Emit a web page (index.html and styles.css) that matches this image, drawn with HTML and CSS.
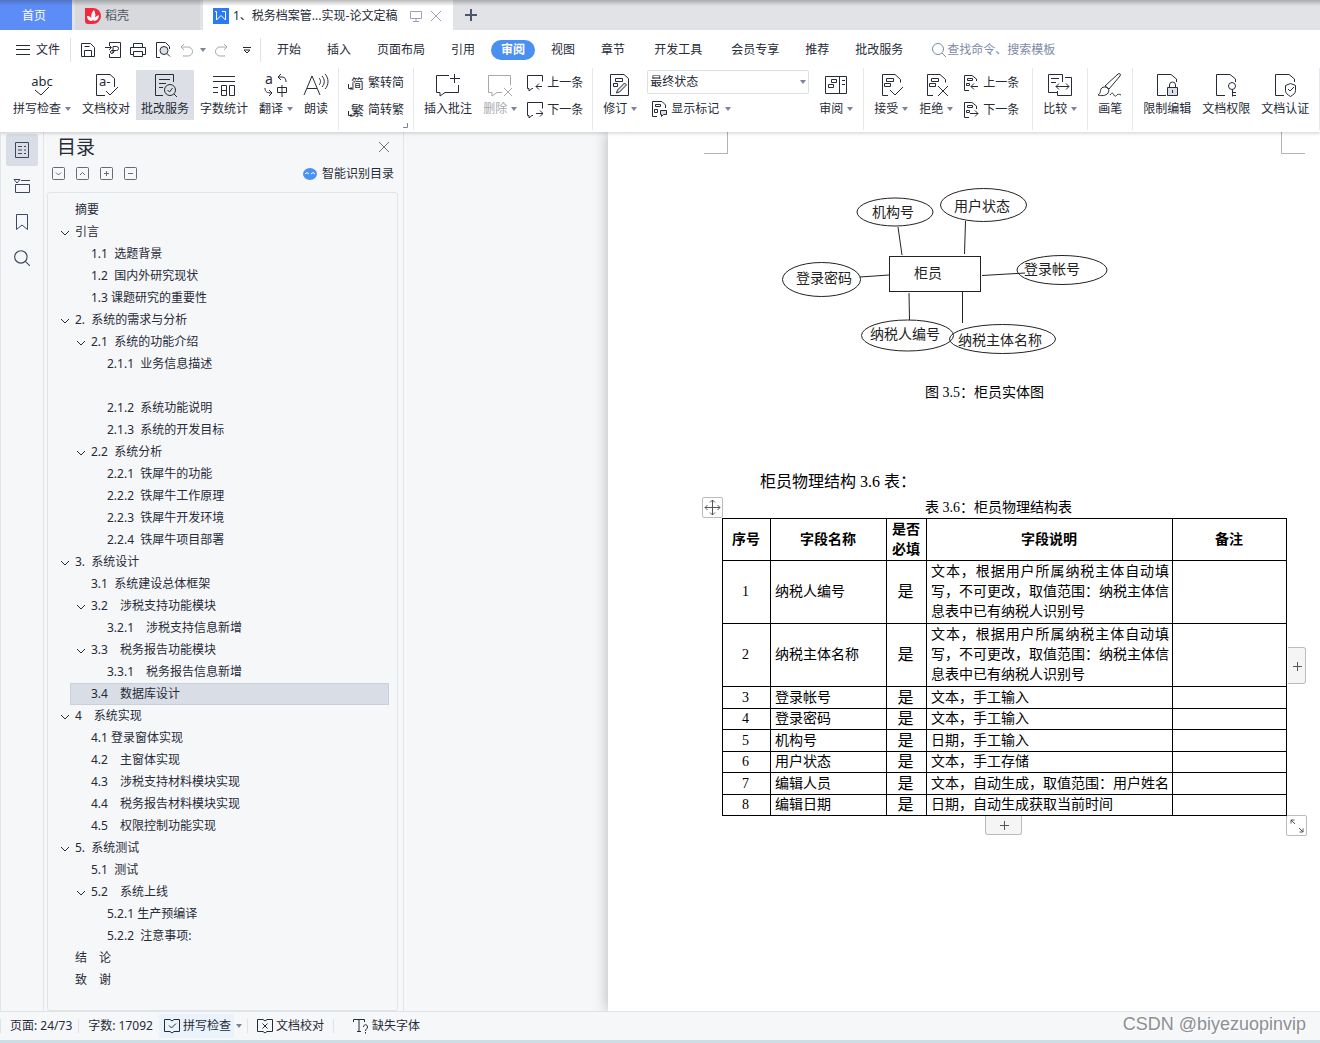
FILE: index.html
```html
<!DOCTYPE html>
<html lang="zh-CN">
<head>
<meta charset="utf-8">
<title>税务档案管理系统-论文定稿</title>
<link rel="stylesheet" href="styles.css">
</head>
<body>
<svg class="defs" aria-hidden="true">
  <symbol id="caret" viewBox="0 0 6 4"><path d="M0 0h6L3 4z" fill="currentColor" stroke="none"/></symbol>
  <symbol id="down" viewBox="0 0 10 10"><path d="M1 3l4 4 4-4"/></symbol>
  <symbol id="close" viewBox="0 0 12 12"><path d="M1 1l10 10M11 1L1 11"/></symbol>
  <symbol id="search" viewBox="0 0 16 16"><circle cx="7" cy="7" r="5.5"/><path d="M11 11l4 4"/></symbol>
  <symbol id="mark" viewBox="0 0 24 24"><path d="M9 22.500H3.500V1.500H16l5.500 5v3M7.500 5.500h7v3h-7zM5.500 10.500h6v3h-6z"/></symbol>
  <symbol id="sheet" viewBox="0 0 24 24"><path d="M11 22.500H2.500V1.500H16l5.500 4.500v3"/></symbol>
  <symbol id="prevmark" viewBox="0 0 16 16"><path d="M6 15.500H1.500V.500H9L13.500 4v2M4.500 3.500h5v2h-5zM3.500 8.500h3v2h-3zM15 11.500H8M11 8.500l-3 3 3 3"/></symbol>
  <symbol id="nextmark" viewBox="0 0 16 16"><path d="M6 15.500H1.500V.500H9L13.500 4v3M4.500 3.500h5v2h-5zM3.500 8.500h3v2h-3zM7 11.500h8M12 8.500l3 3-3 3"/></symbol>
  <symbol id="prevnote" viewBox="0 0 16 16"><path d="M6 13.500H5l-3 2.500v-2.500H.500v-13h15v6M15 11.500H9M12 8.500l-3 3 3 3"/></symbol>
  <symbol id="nextnote" viewBox="0 0 16 16"><path d="M6 13.500H5l-3 2.500v-2.500H.500v-13h15v6M9 11.500h7M13 8.500l3 3-3 3"/></symbol>
</svg>

<header class="top">
  <div class="tabs">
    <button class="tab home">首页</button>
    <button class="tab docer">
      <svg width="16" height="16" viewBox="0 0 16 16"><path d="M0 0h8a8 8 0 010 16H3a3 3 0 01-3-3z" fill="#f3293d" stroke="none"/><path d="M8 13C5 10 6 5 9 2c2 4 2 8-1 11zM7 13C4 13 2 11 2 8c3 0 5 2 5 5zM9 13c0-3 2-5 5-6 0 3-2 6-5 6z" fill="#fff" stroke="none"/></svg>稻壳
    </button>
    <div class="tab active">
      <svg width="16" height="16" viewBox="0 0 16 16"><path d="M0 0h16v16H0z" fill="#2b7cf0" stroke="none"/><path d="M2 3.500h1.500V12L8 7.500l4.500 4.500V3.500H9" stroke="#fff"/></svg>
      <span class="tab-name">1、税务档案管...实现-论文定稿</span>
      <svg class="faint" width="12" height="12" viewBox="0 0 12 12"><path d="M.500 1.500h11v7H.500zM6 8.500V11M3 11.500h6"/></svg>
      <button class="bare faint" aria-label="关闭标签"><svg width="12" height="12"><use href="#close"/></svg></button>
    </div>
    <button class="bare add" aria-label="新建"><svg width="12" height="12" viewBox="0 0 12 12"><path d="M6 0v12M0 6h12" stroke-width="2"/></svg></button>
  </div>

  <div class="menu">
    <button class="bare file"><svg width="14" height="10" viewBox="0 0 14 10"><path d="M0 .500h14M0 4.500h14M0 9.500h14"/></svg>文件</button>
    <div class="quick">
      <button class="bare" aria-label="保存"><svg width="16" height="16" viewBox="0 0 16 16"><path d="M1.500 14.500v-13h9l4 4v9zM4.500 14V8.500h7V14M4.500 4.500h5"/></svg></button>
      <button class="bare" aria-label="输出为PDF"><svg width="16" height="16" viewBox="0 0 16 16"><path d="M4.500 3V.500h11v15h-11V12M0 5.500h6M4 3l2.500 2.500L4 8M8 11V4.500h3.500a2 2 0 010 4H7a1.500 1.500 0 100 3c2 0 1-3 3-3"/></svg></button>
      <button class="bare" aria-label="打印"><svg width="16" height="16" viewBox="0 0 16 16"><path d="M3.500 5V1.500h9V5M3.500 12.500h-3v-7h15v7h-3M3.500 9.500h9v5h-9z"/></svg></button>
      <button class="bare" aria-label="打印预览"><svg width="16" height="16" viewBox="0 0 16 16"><path d="M5 15.500H1.500V.500h9l4 4V7"/><circle cx="9" cy="8.500" r="4" fill="#dce0e6"/><path d="M12 11.500l3 3"/></svg></button>
      <button class="bare off" aria-label="撤销"><svg width="13" height="14" viewBox="0 0 13 14"><path d="M4 1L1 4l3 3M1 4h7a4.500 4.500 0 010 9H3"/></svg></button>
      <svg class="caret" width="6" height="4"><use href="#caret"/></svg>
      <button class="bare off" aria-label="恢复"><svg width="13" height="14" viewBox="0 0 13 14"><path d="M9 1l3 3-3 3M12 4H5a4.500 4.500 0 000 9h5"/></svg></button>
      <button class="bare" aria-label="更多"><svg width="8" height="7" viewBox="0 0 8 7"><path d="M0 .500h8M1 3l3 3 3-3z"/></svg></button>
    </div>
    <nav class="menus">
      <button>开始</button><button>插入</button><button>页面布局</button><button>引用</button><button class="on">审阅</button><button>视图</button><button>章节</button><button class="wide">开发工具</button><button>会员专享</button><button>推荐</button><button>批改服务</button>
    </nav>
    <label class="find"><svg width="16" height="16"><use href="#search"/></svg><input type="text" placeholder="查找命令、搜索模板" aria-label="查找命令、搜索模板"></label>
  </div>

  <div class="ribbon">
    <div class="group first">
      <button class="big"><svg width="24" height="24" viewBox="0 0 24 24"><text x="12" y="13" text-anchor="middle" font-size="13">abc</text><path d="M5 17l6 5 8-8"/></svg><span>拼写检查<svg class="caret" width="6" height="4"><use href="#caret"/></svg></span></button>
      <button class="big"><svg width="24" height="24" viewBox="0 0 24 24"><path d="M11 22.500H2.500V1.500H16l4.500 4V14M12 18l4 4 8-8"/><text x="5" y="13" font-size="13">a-</text></svg><span>文档校对</span></button>
      <button class="big on"><svg width="24" height="24" viewBox="0 0 24 24"><path d="M10 22.500H2.500V1.500h18V9M6 6.500h11M6 10.500h7M6 14.500h4"/><circle cx="17" cy="17" r="5.500"/><path d="M21 21l3 3M14.500 17l2 2 3-4"/></svg><span>批改服务</span></button>
      <button class="big"><svg width="24" height="24" viewBox="0 0 24 24"><path d="M1 3.500h22M1 8.500h22M1 14.500h5M1 19.500h5M9.500 12.500h5v10h-5zM17.500 12.500h5v10h-5zM9.500 17.500h5"/></svg><span>字数统计</span></button>
      <button class="big"><svg width="24" height="24" viewBox="0 0 24 24"><text x="1" y="11" font-size="14">a</text><path d="M17 1l-3 3 3 3M14 4h4c3 0 4 2 4 5M1 15c0 4 2 5 7 5M5 17l3 3-3 3M13.500 14.500h9v5h-9zM18 12v12"/></svg><span>翻译<svg class="caret" width="6" height="4"><use href="#caret"/></svg></span></button>
      <button class="big"><svg width="24" height="24" viewBox="0 0 24 24"><path d="M0 22L8 3l8 19M3 15.500h10M15 5c2 2 2 5 0 7M18 3c3 3 3 8 0 11M21 1c4 4 4 11 0 15"/></svg><span>朗读</span></button>
    </div>
    <div class="group">
      <div class="stack">
        <button class="small"><svg width="16" height="16" viewBox="0 0 16 16"><text x="3" y="13" font-size="13">简</text><path d="M.500 9v4.500H4M2.500 12L4 13.500 2.500 15"/></svg>繁转简</button>
        <button class="small"><svg width="16" height="16" viewBox="0 0 16 16"><text x="3" y="13" font-size="13">繁</text><path d="M.500 9v4.500H4M2.500 12L4 13.500 2.500 15"/></svg>简转繁</button>
      </div>
      <svg class="corner" width="5" height="5" viewBox="0 0 5 5"><path d="M0 4.500h4.500V0"/></svg>
    </div>
    <div class="group">
      <button class="big"><svg width="24" height="24" viewBox="0 0 24 24"><path d="M13 2.500H.500v17H4V23l5-3.500h13.500V12M18.500 1v9M14 5.500h10"/></svg><span>插入批注</span></button>
      <button class="big off"><svg width="24" height="24" viewBox="0 0 24 24"><path d="M22.500 12V2.500H.500v17H4V23l5-3.500h5M16 15l8 8M24 15l-8 8"/></svg><span>删除<svg class="caret" width="6" height="4"><use href="#caret"/></svg></span></button>
      <div class="stack">
        <button class="small"><svg width="16" height="16"><use href="#prevnote"/></svg>上一条</button>
        <button class="small"><svg width="16" height="16"><use href="#nextnote"/></svg>下一条</button>
      </div>
    </div>
    <div class="group">
      <button class="big"><svg width="24" height="24" viewBox="0 0 24 24"><path d="M2.500 22.500v-21H16l4.500 4v17zM7.500 5.500h7v3h-7zM5.500 10.500h4v3h-4z"/><path d="M8.500 20l1-3 7-7 2 2-7 7z" fill="#dce0e6"/></svg><span>修订<svg class="caret" width="6" height="4"><use href="#caret"/></svg></span></button>
      <div class="stack view">
        <div class="pick"><select aria-label="显示状态"><option>最终状态</option><option>原始状态</option></select><svg class="caret" width="6" height="4"><use href="#caret"/></svg></div>
        <button class="small"><svg width="16" height="16" viewBox="0 0 16 16"><path d="M6 15.500H1.500V.500H11L14.500 4v3M4.500 3.500h5v2h-5zM3.500 8.500h3v3h-3z"/><path d="M9.500 9.500h6v4h-3l-2 2v-2h-1z" fill="#dce0e6"/></svg>显示标记<svg class="caret" width="6" height="4"><use href="#caret"/></svg></button>
      </div>
      <button class="big"><svg width="24" height="24" viewBox="0 0 24 24"><path d="M1.500 3.500h21v17h-21zM15.500 3v18M7.500 6.500h5v3h-5zM4.500 11.500h5v3h-5zM18 7.500h3M18 11.500h3"/></svg><span>审阅<svg class="caret" width="6" height="4"><use href="#caret"/></svg></span></button>
    </div>
    <div class="group changes">
      <button class="big"><svg width="24" height="24" viewBox="0 0 24 24"><use href="#mark"/><path d="M11 17l5 5 8-8"/></svg><span>接受<svg class="caret" width="6" height="4"><use href="#caret"/></svg></span></button>
      <button class="big"><svg width="24" height="24" viewBox="0 0 24 24"><use href="#mark"/><path d="M14 13l10 10M24 13L14 23"/></svg><span>拒绝<svg class="caret" width="6" height="4"><use href="#caret"/></svg></span></button>
      <div class="stack">
        <button class="small"><svg width="16" height="16"><use href="#prevmark"/></svg>上一条</button>
        <button class="small"><svg width="16" height="16"><use href="#nextmark"/></svg>下一条</button>
      </div>
    </div>
    <div class="group">
      <button class="big"><svg width="24" height="24" viewBox="0 0 24 24"><path d="M14.500 9V1.500H.500v18H10M3 5.500h8M3 9.500h5M17 4.500h6.500v18h-14V18M8 13.500h13M11 10.500l-3 3 3 3M18 10.500l3 3-3 3"/></svg><span>比较<svg class="caret" width="6" height="4"><use href="#caret"/></svg></span></button>
    </div>
    <div class="group">
      <button class="big"><svg width="24" height="24" viewBox="0 0 24 24"><path d="M7 13L20 1c2-1 3 0 2 2L11 16zM7 14c3 0 5 3 3 6-2 3-7 3-10 2 3-2 2-4 3-6 1-2 3-2 4-2zM12 22c2-3 3-2 4 0s2 1 3 0 2-1 4 0"/></svg><span>画笔</span></button>
    </div>
    <div class="group">
      <button class="big"><svg width="24" height="24" viewBox="0 0 24 24"><use href="#sheet"/><path d="M12.500 14.500h10v8h-10z" fill="#dce0e6"/><path d="M14.500 14v-2a3 3 0 016 0v2M17.500 17v3"/></svg><span>限制编辑</span></button>
      <button class="big"><svg width="24" height="24" viewBox="0 0 24 24"><use href="#sheet"/><circle cx="18" cy="13" r="3.500"/><path d="M18.500 16.500v7M18 19.500h4M18 22.500h4"/></svg><span>文档权限</span></button>
      <button class="big"><svg width="24" height="24" viewBox="0 0 24 24"><use href="#sheet"/><path d="M17.500 10.500l5 2v5c0 3-2 4-5 6-3-2-5-3-5-6v-5zM15 16l2 2 4-4"/></svg><span>文档认证</span></button>
    </div>
  </div>
</header>

<main class="work">
  <div class="rail">
    <button class="on" aria-label="目录"><svg width="16" height="18" viewBox="0 0 16 18"><path d="M1.500 1.500h13v15h-13zM4 5.500h4M10 5.500h2M4 9h4M10 9h2M4 12.500h4M10 12.500h2"/></svg></button>
    <button aria-label="章节"><svg width="16" height="18" viewBox="0 0 16 18"><path d="M0 2.500h6L3 6zM7 3.500h9M1.500 7.500h14v8h-14z"/></svg></button>
    <button aria-label="书签"><svg width="16" height="18" viewBox="0 0 16 18"><path d="M2.500 1.500h11v15L8 12l-5.500 4.500z"/></svg></button>
    <button aria-label="查找"><svg width="18" height="18"><use href="#search"/></svg></button>
  </div>

  <aside class="panel">
    <div class="panel-head"><h1>目录</h1><button class="bare" aria-label="关闭目录"><svg width="12" height="12"><use href="#close"/></svg></button></div>
    <div class="tools">
      <button class="bare" aria-label="展开"><svg width="14" height="14" viewBox="0 0 14 14"><rect x=".5" y=".5" width="12" height="12" rx="1"/><path d="M4 5.500l2.500 2.500L9 5.500"/></svg></button>
      <button class="bare" aria-label="收起"><svg width="14" height="14" viewBox="0 0 14 14"><rect x=".5" y=".5" width="12" height="12" rx="1"/><path d="M4 8l2.500-2.500L9 8"/></svg></button>
      <button class="bare" aria-label="升级"><svg width="14" height="14" viewBox="0 0 14 14"><rect x=".5" y=".5" width="12" height="12" rx="1"/><path d="M4 6.500h5M6.500 4v5"/></svg></button>
      <button class="bare" aria-label="降级"><svg width="14" height="14" viewBox="0 0 14 14"><rect x=".5" y=".5" width="12" height="12" rx="1"/><path d="M4 6.500h5"/></svg></button>
      <button class="bare smart"><svg width="14" height="12" viewBox="0 0 14 12"><ellipse cx="7" cy="6" rx="7" ry="6" fill="#4a92f2" stroke="none"/><path d="M2 6l2-1.500L6 6M8 6l2-1.500L12 6" stroke="#fff"/></svg>智能识别目录</button>
    </div>
    <div class="tree">
      <a href="#">摘要</a>
      <a href="#"><svg width="10" height="10"><use href="#down"/></svg>引言</a>
      <a href="#" class="l1">1.1  选题背景</a>
      <a href="#" class="l1">1.2  国内外研究现状</a>
      <a href="#" class="l1">1.3 课题研究的重要性</a>
      <a href="#"><svg width="10" height="10"><use href="#down"/></svg>2.  系统的需求与分析</a>
      <a href="#" class="l1"><svg width="10" height="10"><use href="#down"/></svg>2.1  系统的功能介绍</a>
      <a href="#" class="l2">2.1.1  业务信息描述</a>
      <a href="#" class="l2" aria-label="空标题"></a>
      <a href="#" class="l2">2.1.2  系统功能说明</a>
      <a href="#" class="l2">2.1.3  系统的开发目标</a>
      <a href="#" class="l1"><svg width="10" height="10"><use href="#down"/></svg>2.2  系统分析</a>
      <a href="#" class="l2">2.2.1  铁犀牛的功能</a>
      <a href="#" class="l2">2.2.2  铁犀牛工作原理</a>
      <a href="#" class="l2">2.2.3  铁犀牛开发环境</a>
      <a href="#" class="l2">2.2.4  铁犀牛项目部署</a>
      <a href="#"><svg width="10" height="10"><use href="#down"/></svg>3.  系统设计</a>
      <a href="#" class="l1">3.1  系统建设总体框架</a>
      <a href="#" class="l1"><svg width="10" height="10"><use href="#down"/></svg>3.2　涉税支持功能模块</a>
      <a href="#" class="l2">3.2.1　涉税支持信息新增</a>
      <a href="#" class="l1"><svg width="10" height="10"><use href="#down"/></svg>3.3　税务报告功能模块</a>
      <a href="#" class="l2">3.3.1　税务报告信息新增</a>
      <a href="#" class="l1 current">3.4　数据库设计</a>
      <a href="#"><svg width="10" height="10"><use href="#down"/></svg>4　系统实现</a>
      <a href="#" class="l1">4.1 登录窗体实现</a>
      <a href="#" class="l1">4.2　主窗体实现</a>
      <a href="#" class="l1">4.3　涉税支持材料模块实现</a>
      <a href="#" class="l1">4.4　税务报告材料模块实现</a>
      <a href="#" class="l1">4.5　权限控制功能实现</a>
      <a href="#"><svg width="10" height="10"><use href="#down"/></svg>5.  系统测试</a>
      <a href="#" class="l1">5.1  测试</a>
      <a href="#" class="l1"><svg width="10" height="10"><use href="#down"/></svg>5.2　系统上线</a>
      <a href="#" class="l2">5.2.1 生产预编译</a>
      <a href="#" class="l2">5.2.2  注意事项:</a>
      <a href="#">结　论</a>
      <a href="#">致　谢</a>
    </div>
  </aside>

  <section class="canvas">
    <article class="page">
      <div class="crops"><i></i><i></i></div>
      <figure>
        <svg class="er" width="553" height="220" viewBox="728 154 553 220">
          <rect x="889.5" y="256.5" width="91" height="35"/>
          <ellipse cx="895" cy="212" rx="38" ry="14"/>
          <ellipse cx="983.500" cy="205" rx="43" ry="16.500"/>
          <ellipse cx="821.500" cy="279.500" rx="39" ry="17"/>
          <ellipse cx="1062" cy="270" rx="45" ry="14.500"/>
          <ellipse cx="907.500" cy="335.500" rx="46" ry="15.500"/>
          <ellipse cx="1002.500" cy="339" rx="53" ry="14.500"/>
          <path d="M898 227l4 28M965.500 221l-1 33M860 277l29-2M982 275.500l43-2.500M909 293l.500 27M962.500 292v31"/>
          <g font-size="14"><text x="872" y="217">机构号</text><text x="954" y="211">用户状态</text><text x="914" y="278">柜员</text><text x="796" y="283">登录密码</text><text x="1024" y="274">登录帐号</text><text x="870" y="339">纳税人编号</text><text x="958" y="345">纳税主体名称</text></g>
        </svg>
        <figcaption>图 3.5：柜员实体图</figcaption>
      </figure>
      <p>柜员物理结构 3.6 表：</p>
      <div class="table-box">
        <table>
          <caption>表 3.6：柜员物理结构表</caption>
          <colgroup><col class="c1"><col class="c2"><col class="c3"><col class="c4"><col class="c5"></colgroup>
          <thead><tr><th>序号</th><th>字段名称</th><th>是否必填</th><th>字段说明</th><th>备注</th></tr></thead>
          <tbody>
            <tr class="tall"><td>1</td><td>纳税人编号</td><td>是</td><td>文本，根据用户所属纳税主体自动填写，不可更改，取值范围：纳税主体信息表中已有纳税人识别号</td><td></td></tr>
            <tr class="tall"><td>2</td><td>纳税主体名称</td><td>是</td><td>文本，根据用户所属纳税主体自动填写，不可更改，取值范围：纳税主体信息表中已有纳税人识别号</td><td></td></tr>
            <tr><td>3</td><td>登录帐号</td><td>是</td><td>文本，手工输入</td><td></td></tr>
            <tr><td>4</td><td>登录密码</td><td>是</td><td>文本，手工输入</td><td></td></tr>
            <tr><td>5</td><td>机构号</td><td>是</td><td>日期，手工输入</td><td></td></tr>
            <tr><td>6</td><td>用户状态</td><td>是</td><td>文本，手工存储</td><td></td></tr>
            <tr><td>7</td><td>编辑人员</td><td>是</td><td>文本，自动生成，取值范围：用户姓名</td><td></td></tr>
            <tr><td>8</td><td>编辑日期</td><td>是</td><td>日期，自动生成获取当前时间</td><td></td></tr>
          </tbody>
        </table>
        <button class="handle move" aria-label="移动表格"><svg width="15" height="15" viewBox="0 0 15 15"><path d="M7.500 0v15M0 7.500h15M5 2.500L7.500 0 10 2.500M5 12.500L7.500 15l2.500-2.500M2.500 5L0 7.500 2.500 10M12.500 5L15 7.500 12.500 10"/></svg></button>
        <button class="handle col" aria-label="添加列"><svg width="10" height="10" viewBox="0 0 10 10"><path d="M5.500 1v9M1 5.500h9"/></svg></button>
        <button class="handle row" aria-label="添加行"><svg width="10" height="10" viewBox="0 0 10 10"><path d="M5.500 1v9M1 5.500h9"/></svg></button>
        <button class="handle size" aria-label="调整大小"><svg width="14" height="14" viewBox="0 0 14 14"><path d="M5 5L1 1M1 4.500V1h3.500M9 9l4 4M13 9.500V13H9.500"/></svg></button>
      </div>
    </article>
  </section>
</main>

<footer>
  <div class="status">
    <span class="cell">页面: 24/73</span>
    <span class="cell">字数: 17092</span>
    <button class="bare spell"><svg width="16" height="16" viewBox="0 0 16 16"><path d="M.500 1.500H6l2 1.500 2-1.500h5.500v12H10L8 15l-2-1.500H.500zM5 7.500l2.500 2.500L12 5.500"/></svg>拼写检查</button>
    <button class="bare more" aria-label="拼写选项"><svg class="caret" width="6" height="4"><use href="#caret"/></svg></button>
    <button class="bare proof"><svg width="16" height="16" viewBox="0 0 16 16"><path d="M.500 1.500H6l2 1.500 2-1.500h5.500v12H10L8 15l-2-1.500H.500zM5.500 5.500l5 5M10.500 5.500l-5 5"/></svg>文档校对</button>
    <button class="bare fonts"><svg width="16" height="16" viewBox="0 0 16 16"><path d="M.500 4V1.500h11V4M6 1.500v12M4 13.500h4M10.500 9c0-3 4-3 4 0 0 2-2 2-2 4M12.500 14v1.500"/></svg>缺失字体</button>
    <span class="credit">CSDN @biyezuopinvip</span>
  </div>
  <div class="edge"></div>
</footer>
</body>
</html>
```
FILE: styles.css
```css
* { box-sizing: border-box; }

body {
  margin: 0;
  height: 100vh;
  display: flex;
  flex-direction: column;
  overflow: hidden;
  background: #f6f7f9;
  color: #262b38;
  font: 12px/20px "Noto Sans", "Noto Sans CJK SC", sans-serif;
}

button, input, select { font: inherit; color: inherit; }
button { border: 0; background: none; padding: 0; white-space: nowrap; }
a { color: inherit; text-decoration: none; }
svg { flex: none; fill: none; stroke: currentColor; overflow: visible; }
svg text { fill: currentColor; stroke: none; }
.defs { position: absolute; width: 0; height: 0; }
.bare { display: flex; align-items: center; }
.caret { color: #7a8499; }
.faint { color: #98a2b8; }
.off { color: #a5a8ae; }

/* Window tabs */
.top { position: relative; z-index: 2; background: #fff; box-shadow: 0 1px 4px rgba(0, 0, 0, .2); }
.tabs {
  display: flex;
  height: 30px;
  background: linear-gradient(#aaabad, #e1e3e7 6px);
}
.tab { display: flex; align-items: center; gap: 4px; padding-top: 2px; }
.home {
  width: 72px;
  margin-right: 3px;
  padding-right: 4px;
  justify-content: center;
  color: #fff;
  background: linear-gradient(#5374c4, #5c8df7 6px);
}
.docer {
  width: 125px;
  margin-right: 3px;
  padding-left: 10px;
  color: #4e5360;
  background: linear-gradient(#a5a6a9, #d8d9dd 6px);
}
.active {
  width: 250px;
  padding: 2px 11px 0 10px;
  background: linear-gradient(#bbb, #fff 6px);
}
.tab-name { flex: 1; white-space: nowrap; }
.active .bare { margin-left: 4px; }
.add { margin-left: 12px; color: #4a556e; }

/* Menu row */
.menu { display: flex; align-items: center; height: 38px; padding-top: 2px; }
.file { gap: 6px; padding: 0 10px 0 16px; }
.quick {
  display: flex;
  align-items: center;
  gap: 9px;
  height: 24px;
  padding: 0 9px;
  border: solid #e0e2e6;
  border-width: 0 1px;
}
.quick .off { margin-right: -2px; }
.quick .bare:last-child { margin-left: 8px; }
.menus { display: flex; gap: 6px; padding-left: 6px; }
.menus button { height: 20px; padding: 0 10px; }
.menus .on { border-radius: 10px; background: #4a90f0; color: #fff; font-weight: 700; }
.menus .wide { padding: 0 13px; }
.find { display: flex; align-items: center; flex: 1; margin-left: 18px; color: #7d8aa6; }
.find input { flex: 1; min-width: 0; padding: 0; border: 0; outline: 0; background: none; }
.find input::placeholder { color: #7d8aa6; opacity: 1; }

/* Ribbon */
.ribbon { display: flex; height: 64px; padding-bottom: 2px; }
.group {
  position: relative;
  display: flex;
  flex: none;
  gap: 1px;
  padding: 2px 5px 0;
  border-right: 1px solid #e6e8eb;
}
.first { padding-left: 8px; }
.changes { padding-right: 9px; }
.big {
  display: flex;
  flex-direction: column;
  align-items: center;
  height: 50px;
  padding: 3px 5px 0;
}
.big span { display: flex; align-items: center; gap: 4px; height: 26px; }
.big.on { background: #dce0e6; }
.stack { display: flex; flex-direction: column; gap: 2px; padding: 0 4px; }
.small { display: flex; align-items: center; gap: 4px; height: 25px; padding-top: 1px; }
.small .caret { margin-left: 2px; }
.corner { position: absolute; right: 5px; bottom: 2px; color: #7a8499; }
.pick { position: relative; display: flex; align-items: center; }
.pick select {
  width: 162px;
  height: 24px;
  padding: 0 2px;
  border: 1px solid #dcdfe4;
  border-radius: 2px;
  background: #fff;
  appearance: none;
}
.pick .caret { position: absolute; right: 3px; }
.view .small { padding-left: 4px; }

/* Work area */
.work { display: flex; flex: 1; min-height: 0; }
.rail {
  display: flex;
  flex-direction: column;
  gap: 4px;
  width: 44px;
  padding: 2px 5px;
  border: solid #e1e4e8;
  border-width: 0 1px;
  color: #3b4660;
}
.rail button {
  display: flex;
  align-items: center;
  justify-content: center;
  height: 32px;
  border-radius: 2px;
}
.rail .on { background: #d9dee6; }

.panel {
  display: flex;
  flex-direction: column;
  width: 360px;
  padding: 0 5px 0 3px;
  border-right: 1px solid #e1e4e8;
}
.panel-head {
  display: flex;
  justify-content: space-between;
  align-items: center;
  height: 30px;
  padding: 0 8px 0 10px;
}
.panel-head .bare { color: #6b7384; }
h1 { margin: 0; font-size: 19px; font-weight: 400; }
.tools { display: flex; align-items: center; gap: 10px; height: 24px; padding: 0 4px 0 5px; color: #666b75; }
.smart { gap: 5px; margin-left: auto; color: #262b38; }
.tree {
  display: flex;
  flex-direction: column;
  flex: 1;
  min-height: 0;
  margin-top: 6px;
  padding: 6px 8px 0 12px;
  border: 1px solid #e1e4e8;
  border-radius: 3px;
  overflow: hidden;
  white-space: pre;
}
.tree a { display: flex; align-items: center; flex: none; height: 22px; padding-left: 15px; }
.tree a svg { margin: 2px 5px 0 -15px; }
.tree .l1 { padding-left: 31px; }
.tree .l2 { padding-left: 47px; }
.tree .current {
  margin-left: 10px;
  padding-left: 20px;
  border: 1px solid #c8d0da;
  background: #d9dee6;
}

/* Document */
.canvas { flex: 1; min-width: 0; overflow: hidden; }
.page {
  width: 793px;
  min-height: 100%;
  margin-left: 204px;
  background: #fff;
  color: #000;
  box-shadow: 0 0 14px rgba(0, 0, 0, .28);
  font: 14px/21px "Liberation Serif", "Noto Sans CJK SC", serif;
}
.crops { display: flex; justify-content: space-between; height: 22px; padding: 0 96px; }
.crops i { width: 24px; border: solid #b4b4b4; border-width: 0 1px 1px 0; }
.crops i:last-child { border-width: 0 0 1px 1px; }
figure, .page p { margin: 0 120px; }
.er { display: block; font-family: "Noto Sans CJK SC", sans-serif; color: #222; }
figcaption { padding: 8px 40px 0 0; text-align: center; }
.page p { padding-top: 67px; font-size: 16px; line-height: 24px; text-indent: 2em; }
.table-box { position: relative; width: 565px; margin: 3px 0 0 114px; }
table { width: 100%; table-layout: fixed; border-collapse: collapse; line-height: 20px; }
caption { padding-right: 12px; line-height: 21px; }
.c1 { width: 48px; }
.c2 { width: 116px; }
.c3 { width: 40px; }
.c4 { width: 246px; }
.c5 { width: 114px; }
th, td { padding: 0 3px 0 4px; border: 1px solid #000; text-align: justify; }
th { height: 42px; padding: 0 4px 0 3px; text-align: center; }
td { height: 21px; }
tr:nth-child(odd) td { height: 22px; }
.tall td, .tall:nth-child(odd) td { height: 63px; }
td:nth-child(1), td:nth-child(3) { padding: 0 5px 0 3px; text-align: center; }
td:nth-child(3) { font-size: 16px; }

.handle {
  position: absolute;
  display: flex;
  align-items: center;
  justify-content: center;
  width: 21px;
  height: 21px;
  border: 1px solid #bbb;
  border-radius: 2px;
  background: #fff;
  color: #555;
}
.move { left: -20px; top: 0; }
.size { right: -20px; bottom: -20px; }
.col { right: -19px; bottom: 132px; width: 18px; height: 37px; border-left: 0; border-radius: 0 3px 3px 0; background: #f5f5f5; }
.row { left: 263px; bottom: -19px; width: 37px; height: 19px; border-top: 0; border-radius: 0 0 3px 3px; background: #f5f5f5; }

/* Status bar */
.status {
  display: flex;
  align-items: center;
  height: 29px;
  border-top: 1px solid #dfe2e6;
  background: #f6f7f9;
}
.cell { padding-left: 9px; border-left: 1px solid #dfe2e6; line-height: 14px; margin-right: 6px; white-space: nowrap; }
.spell { gap: 3px; height: 24px; padding: 0 3px 0 5px; background: #eaf2fc; }
.more { height: 14px; padding: 0 5px 0 2px; border-right: 1px solid #dfe2e6; }
.proof { gap: 3px; height: 14px; padding: 0 9px; border-right: 1px solid #dfe2e6; }
.fonts { gap: 3px; padding-left: 19px; }
.credit {
  margin: -4px 14px 0 auto;
  color: #8d8f93;
  font: 18px/20px "Liberation Sans", sans-serif;
  text-shadow: 1px 1px 0 #fff;
}
.edge { height: 3px; background: #cddde4; }
```
